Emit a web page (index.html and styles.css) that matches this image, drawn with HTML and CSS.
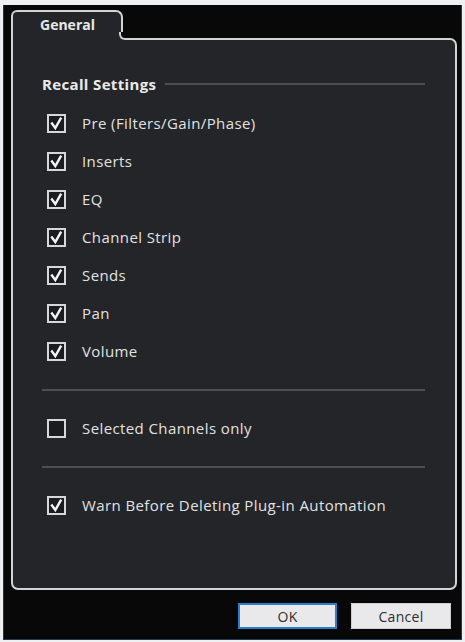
FILE: index.html
```html
<!DOCTYPE html>
<html>
<head>
<meta charset="utf-8">
<link rel="stylesheet" href="styles.css">
</head>
<body>
<div class="window">
  <div class="tabs">
    <div class="tab">General</div>
  </div>
  <div class="panel">
    <div class="heading">
      <span class="heading-text">Recall Settings</span>
      <span class="heading-line"></span>
    </div>
    <div class="group">
      <div class="row"><span class="cb checked"><svg viewBox="0 0 15 15"><path d="M3 7.5 L6.3 12 L11.6 2.6"/></svg></span><span class="label">Pre (Filters/Gain/Phase)</span></div>
      <div class="row"><span class="cb checked"><svg viewBox="0 0 15 15"><path d="M3 7.5 L6.3 12 L11.6 2.6"/></svg></span><span class="label">Inserts</span></div>
      <div class="row"><span class="cb checked"><svg viewBox="0 0 15 15"><path d="M3 7.5 L6.3 12 L11.6 2.6"/></svg></span><span class="label">EQ</span></div>
      <div class="row"><span class="cb checked"><svg viewBox="0 0 15 15"><path d="M3 7.5 L6.3 12 L11.6 2.6"/></svg></span><span class="label">Channel Strip</span></div>
      <div class="row"><span class="cb checked"><svg viewBox="0 0 15 15"><path d="M3 7.5 L6.3 12 L11.6 2.6"/></svg></span><span class="label">Sends</span></div>
      <div class="row"><span class="cb checked"><svg viewBox="0 0 15 15"><path d="M3 7.5 L6.3 12 L11.6 2.6"/></svg></span><span class="label">Pan</span></div>
      <div class="row"><span class="cb checked"><svg viewBox="0 0 15 15"><path d="M3 7.5 L6.3 12 L11.6 2.6"/></svg></span><span class="label">Volume</span></div>
    </div>
    <div class="sep"></div>
    <div class="row"><span class="cb"></span><span class="label">Selected Channels only</span></div>
    <div class="sep"></div>
    <div class="row"><span class="cb checked"><svg viewBox="0 0 15 15"><path d="M3 7.5 L6.3 12 L11.6 2.6"/></svg></span><span class="label">Warn Before Deleting Plug-in Automation</span></div>
  </div>
  <div class="buttons">
    <button class="btn btn-default">OK</button>
    <button class="btn">Cancel</button>
  </div>
</div>
</body>
</html>
```
FILE: styles.css
```css
html, body {
  margin: 0;
  padding: 0;
}
body {
  background: #eef0f2;
  width: 465px;
  height: 642px;
  overflow: hidden;
  font-family: "Open Sans", "Noto Sans", sans-serif;
}
.window {
  margin: 5px 3px 0 3px;
  height: 635px;
  box-sizing: border-box;
  background: #080808;
  border-left: 1px solid #1f3b4c;
  border-right: 1px solid #1f3b4c;
  border-bottom: 1px solid #1f3b4c;
  padding: 5px 4px 0 7px;
}
.tabs {
  display: flex;
  height: 28px;
  position: relative;
  z-index: 1;
}
.tab {
  width: 112px;
  height: 30px;
  box-sizing: border-box;
  border: 2px solid #d2d3d5;
  border-bottom: none;
  border-radius: 6px 7px 0 0;
  background: #232528;
  color: #e8e8e8;
  font-weight: 700;
  font-size: 14px;
  line-height: 25px;
  padding-left: 27px;
  position: relative;
}
.tab::before {
  content: "";
  position: absolute;
  right: -8px;
  bottom: 0;
  width: 10px;
  height: 8px;
  background: #232528;
}
.tab::after {
  content: "";
  position: absolute;
  right: -8px;
  bottom: 0;
  width: 10px;
  height: 8px;
  box-sizing: border-box;
  border-left: 2px solid #d2d3d5;
  border-bottom: 2px solid #d2d3d5;
  border-radius: 0 0 0 6px;
  background: #080808;
}
.panel {
  height: 552px;
  box-sizing: border-box;
  border: 2px solid #d2d3d5;
  border-radius: 0 7px 7px 7px;
  background: #232528;
  padding: 34px 30px 0 29px;
}
.heading {
  display: flex;
  align-items: center;
  height: 20px;
  margin-bottom: 10px;
}
.heading-text {
  font-weight: 700;
  font-size: 15px;
  color: #eaeaea;
  letter-spacing: 0.35px;
}
.heading-line {
  flex: 1;
  height: 2px;
  background: #4c4e52;
  margin-left: 9px;
}
.row {
  display: flex;
  align-items: center;
  height: 38px;
  padding-left: 5px;
}
.cb {
  width: 19px;
  height: 19px;
  box-sizing: border-box;
  border: 2px solid #d6d7d9;
  background: #1b1c1f;
  display: flex;
  align-items: center;
  justify-content: center;
  flex: none;
}
.cb svg {
  width: 15px;
  height: 15px;
}
.cb svg path {
  fill: none;
  stroke: #f4f4f4;
  stroke-width: 2.4;
  stroke-linecap: square;
  stroke-linejoin: miter;
}
.label {
  margin-left: 16px;
  font-size: 15px;
  color: #e2e2e2;
  letter-spacing: 0.4px;
}
.sep {
  height: 2px;
  background: #4c4e52;
  margin: 19px 0 18px 0;
}
.buttons {
  display: flex;
  justify-content: flex-end;
  gap: 14px;
  margin-top: 13px;
  padding-right: 6px;
}
.btn {
  width: 100px;
  height: 26px;
  box-sizing: border-box;
  border: 1px solid #cfd0d3;
  background: #e9e9ec;
  color: #2d2d30;
  font-family: "Open Sans", "Noto Sans", sans-serif;
  font-size: 14px;
  letter-spacing: 0.3px;
  padding: 0;
  margin: 0;
}
.btn-default {
  border: 2px solid #2b7fd1;
  width: 99px;
}
```
